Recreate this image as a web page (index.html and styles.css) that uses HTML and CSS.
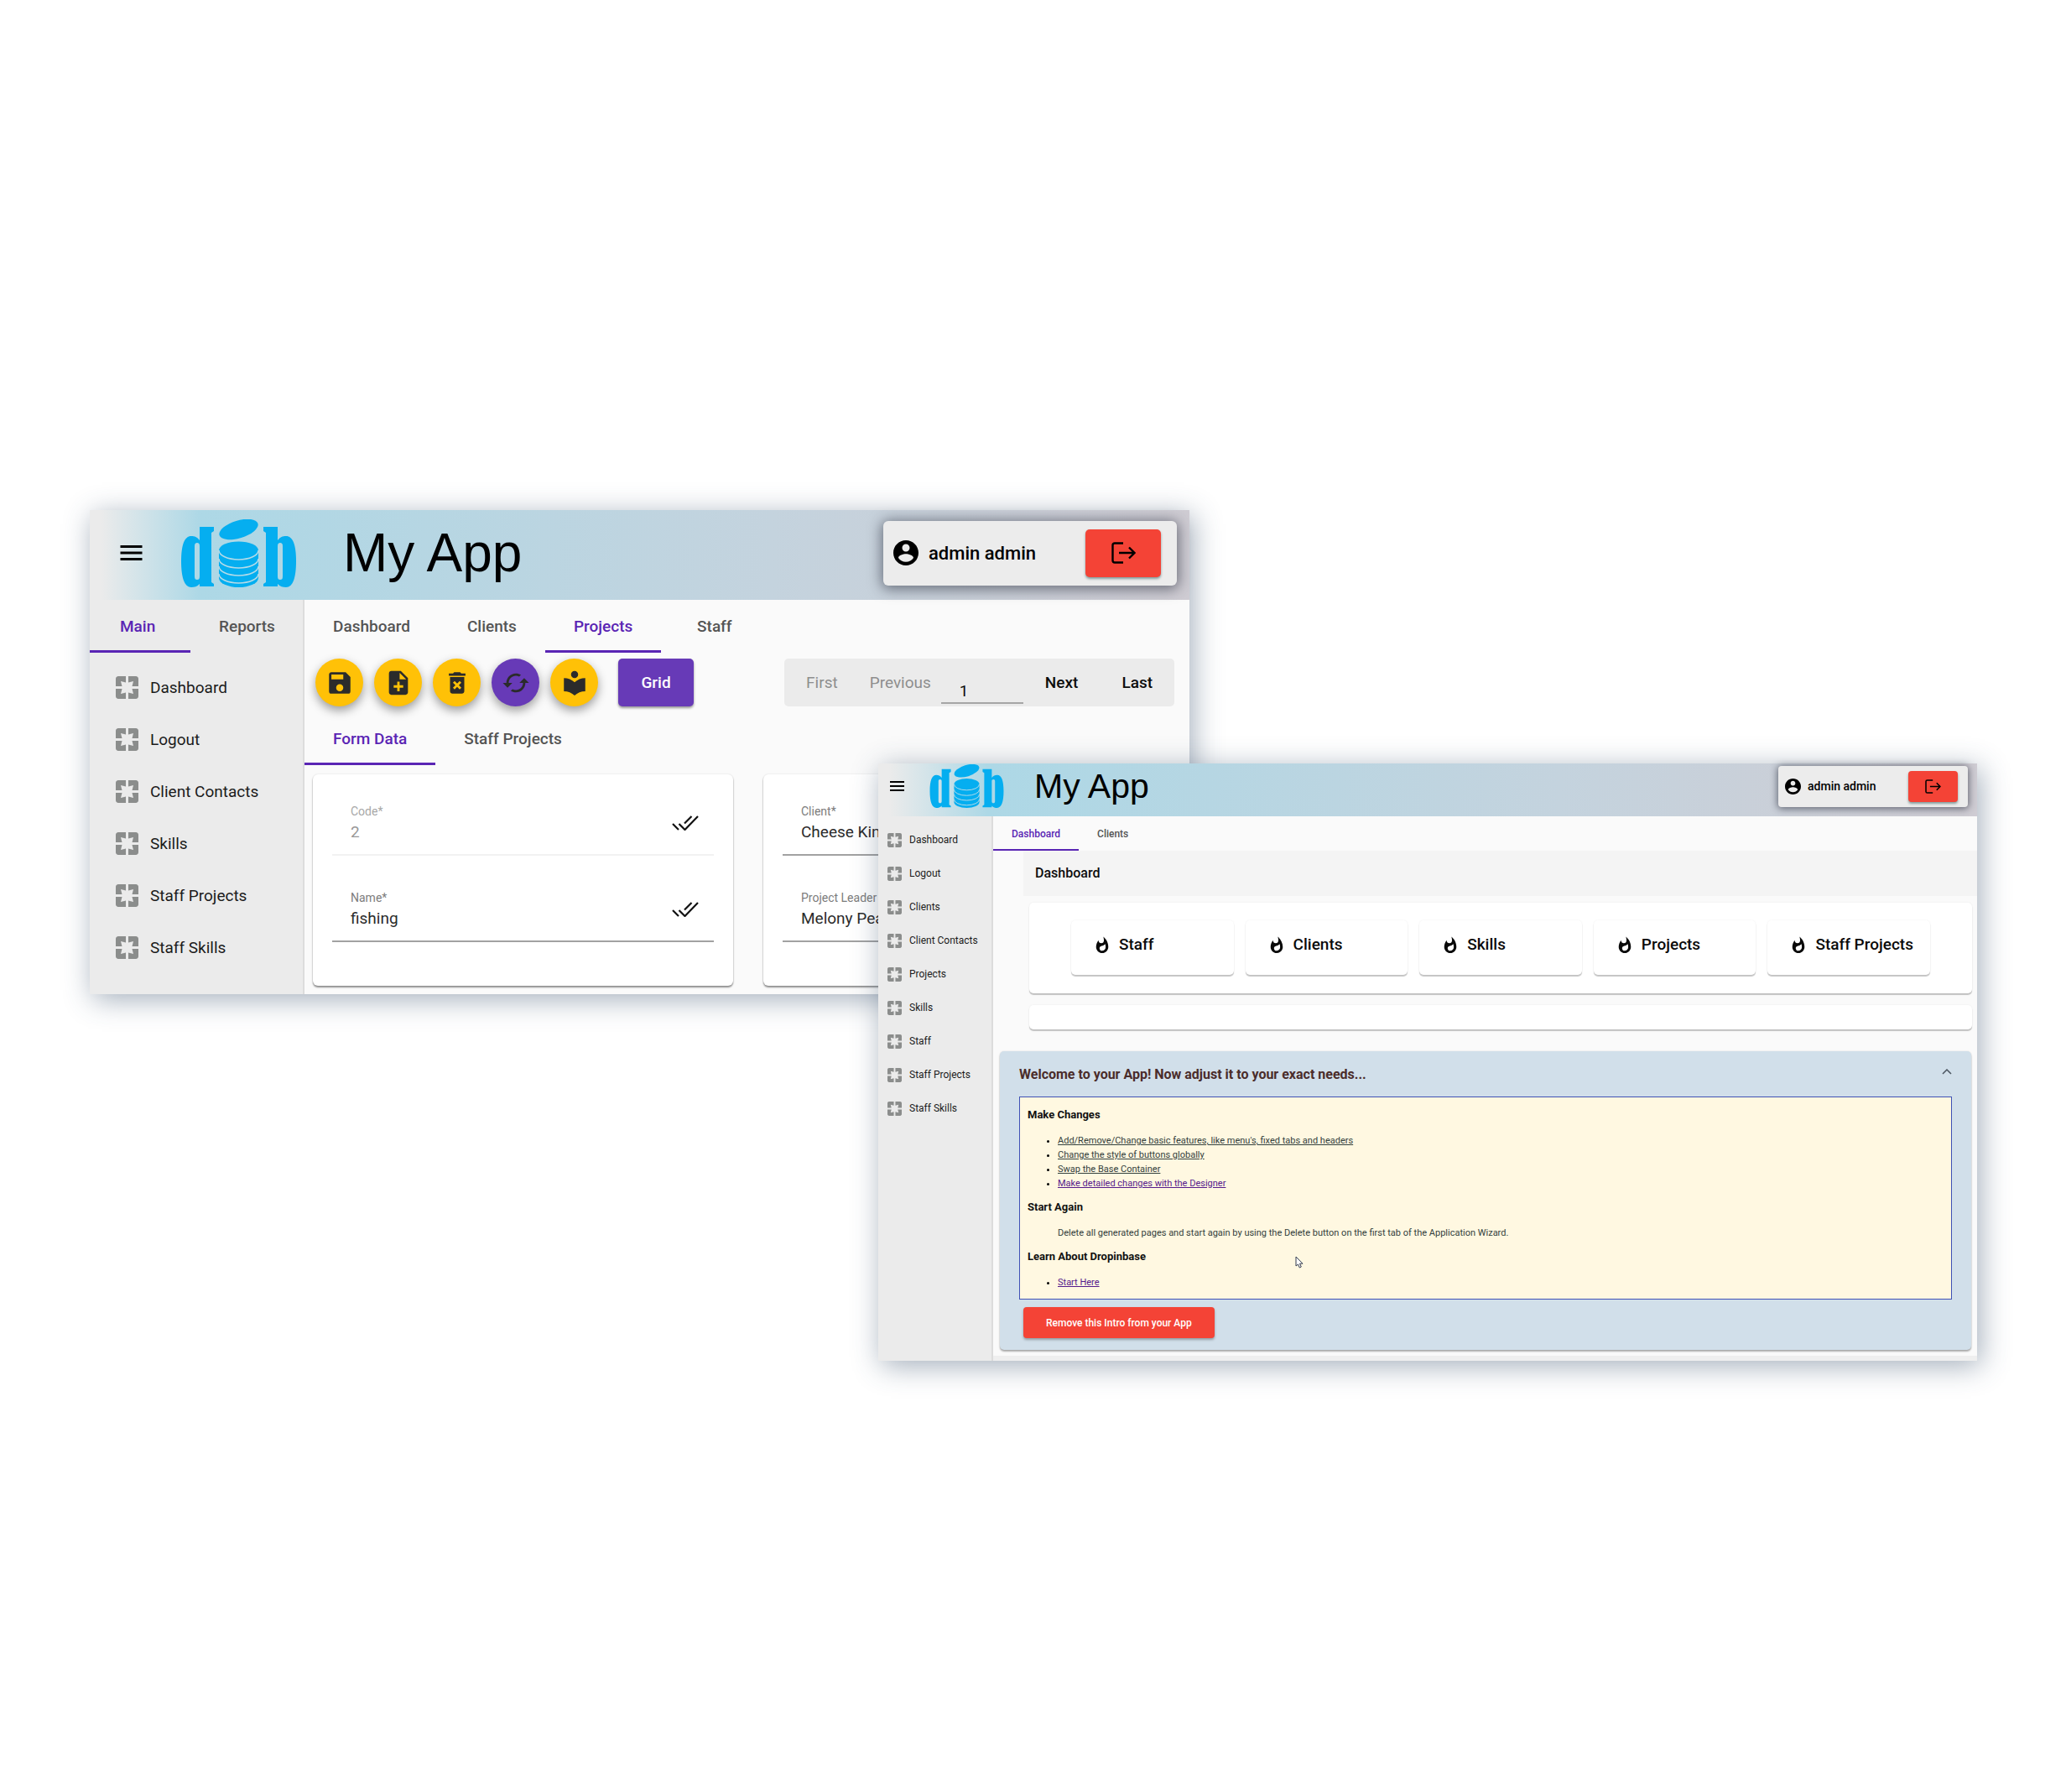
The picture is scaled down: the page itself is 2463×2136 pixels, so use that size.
FILE: index.html
```html
<!DOCTYPE html>
<html lang="en">
<head>
<meta charset="utf-8">
<meta name="viewport" content="width=device-width, initial-scale=1">
<title>My App</title>
<link rel="stylesheet" href="styles.css">
</head>
<body>
<svg class="sprite" aria-hidden="true">
  <symbol id="menu" viewBox="0 0 26 18"><path d="M0 0h26v3H0zM0 7.500h26v3H0zM0 15h26v3H0z"/></symbol>
  <symbol id="logo" viewBox="0 0 137 81">
    <g fill="#05aef0">
      <path id="logo-d" fill-rule="evenodd" d="M22 9h17v5l-3 2v59l3 2v3H22v-3c-3 3-6 4-10 4C4 81 0 70 0 50S4 20 12 20c4 0 7 1 10 5zM19 28c-2 0-3 1-3 4v36c0 3 1 4 3 4s3-1 3-4V32c0-3-1-4-3-4z"/>
      <use href="#logo-d" transform="matrix(-1 0 0 1 137 0)"/>
      <ellipse cx="68.500" cy="12" rx="24" ry="10.500" transform="rotate(-17 68.500 12)"/>
      <path d="M45 37a23.500 10.500 0 0 1 47 0v33a23.500 11 0 0 1-47 0z"/>
    </g>
    <path fill="none" stroke="#b5dbe8" stroke-width="1.500" d="M45 37a23.500 11 0 0 0 47 0M45 47a23.500 11 0 0 0 47 0M45 56a23.500 11 0 0 0 47 0M45 65a23.500 11 0 0 0 47 0"/>
  </symbol>
  <symbol id="account" viewBox="2 2 20 20"><path d="M12 2C6.480 2 2 6.480 2 12s4.480 10 10 10 10-4.480 10-10S17.520 2 12 2zm0 3c1.660 0 3 1.340 3 3s-1.340 3-3 3-3-1.340-3-3 1.340-3 3-3zm0 14.200c-2.500 0-4.710-1.280-6-3.220.03-1.990 4-3.080 6-3.080 1.990 0 5.970 1.090 6 3.080-1.290 1.940-3.500 3.220-6 3.220z"/></symbol>
  <symbol id="exit" viewBox="0 0 29 26"><path fill="none" stroke="currentColor" stroke-width="2.400" d="M14 1.500H4Q1.500 1.500 1.500 4v18q0 2.500 2.500 2.500h10M9 13h18M21 6.500l6.500 6.500-6.500 6.500"/></symbol>
  <symbol id="page" viewBox="3 3 18 18"><path d="M3 5v6h5L7 7l4 1V3H5c-1.100 0-2 .9-2 2zm5 8H3v6c0 1.100.9 2 2 2h6v-5l-4 1 1-4zm9 4l-4-1v5h6c1.100 0 2-.9 2-2v-6h-5l1 4zm2-14h-6v5l4-1-1 4h5V5c0-1.100-.9-2-2-2z"/></symbol>
  <symbol id="save" viewBox="0 0 24 24"><path d="M15 9H5V5h10M12 19a3 3 0 0 1-3-3 3 3 0 0 1 3-3 3 3 0 0 1 3 3 3 3 0 0 1-3 3M17 3H5c-1.110 0-2 .9-2 2v14a2 2 0 0 0 2 2h14a2 2 0 0 0 2-2V7l-4-4z"/></symbol>
  <symbol id="add" viewBox="0 0 24 24"><path d="M14 2H6c-1.100 0-1.990.9-1.990 2L4 20c0 1.100.89 2 1.990 2H18c1.100 0 2-.9 2-2V8l-6-6zm2 14h-3v3h-2v-3H8v-2h3v-3h2v3h3v2zm-3-7V3.500L18.500 9H13z"/></symbol>
  <symbol id="delete" viewBox="0 0 24 24"><path d="M6 19c0 1.100.9 2 2 2h8c1.100 0 2-.9 2-2V7H6v12zm2.460-7.120l1.410-1.410L12 12.590l2.120-2.120 1.410 1.410L13.410 14l2.120 2.120-1.410 1.410L12 15.410l-2.120 2.120-1.410-1.410L10.590 14l-2.130-2.120zM15.500 4l-1-1h-5l-1 1H5v2h14V4z"/></symbol>
  <symbol id="refresh" viewBox="0 0 24 24"><path d="M19 8l-4 4h3c0 3.310-2.690 6-6 6-1.010 0-1.970-.25-2.800-.7l-1.460 1.460C8.970 19.540 10.430 20 12 20c4.420 0 8-3.580 8-8h3l-4-4zM6 12c0-3.310 2.690-6 6-6 1.010 0 1.970.25 2.800.7l1.460-1.460C15.030 4.460 13.570 4 12 4c-4.420 0-8 3.580-8 8H1l4 4 4-4H6z"/></symbol>
  <symbol id="reader" viewBox="0 0 24 24"><path d="M12 11.550C9.640 9.350 6.480 8 3 8v11c3.480 0 6.640 1.350 9 3.550 2.360-2.190 5.520-3.550 9-3.550V8c-3.480 0-6.640 1.350-9 3.550zM12 8c1.660 0 3-1.340 3-3s-1.340-3-3-3-3 1.340-3 3 1.340 3 3 3z"/></symbol>
  <symbol id="checks" viewBox="0 0 32 18"><path fill="none" stroke="currentColor" stroke-width="2.200" d="M1 10l7 7M8.500 10l7 7L31 1M15 9.500L23.500 1"/></symbol>
  <symbol id="flame" viewBox="4 0 16 22"><path d="M13.500.67s.74 2.650.74 4.800c0 2.060-1.350 3.730-3.410 3.730-2.070 0-3.630-1.670-3.630-3.730l.03-.36C5.210 7.510 4 10.620 4 14c0 4.420 3.580 8 8 8s8-3.580 8-8C20 8.610 17.410 3.800 13.500.67zM11.710 19c-1.780 0-3.220-1.400-3.220-3.140 0-1.620 1.050-2.760 2.810-3.120 1.770-.36 3.600-1.210 4.620-2.580.39 1.290.59 2.650.59 4.040 0 2.650-2.150 4.800-4.800 4.800z"/></symbol>
  <symbol id="chevron" viewBox="0 0 12 7"><path fill="none" stroke="currentColor" stroke-width="1.500" d="M1 6l5-5 5 5"/></symbol>
</svg>

<main class="stage">
  <section class="app app-large">
    <header class="app-header">
      <button class="menu-button" aria-label="Menu"><svg><use href="#menu"/></svg></button>
      <svg class="logo" role="img" aria-label="Dropinbase"><use href="#logo"/></svg>
      <h1 class="app-title">My App</h1>
      <div class="user-card">
        <svg class="avatar"><use href="#account"/></svg>
        <span class="user-name">admin admin</span>
        <button class="logout" aria-label="Log out"><svg><use href="#exit"/></svg></button>
      </div>
    </header>
    <div class="app-body">
      <aside class="sidebar">
        <nav class="tabs side-tabs">
          <button class="tab active">Main</button>
          <button class="tab">Reports</button>
        </nav>
        <nav class="side-nav">
          <a href="#"><svg><use href="#page"/></svg>Dashboard</a>
          <a href="#"><svg><use href="#page"/></svg>Logout</a>
          <a href="#"><svg><use href="#page"/></svg>Client Contacts</a>
          <a href="#"><svg><use href="#page"/></svg>Skills</a>
          <a href="#"><svg><use href="#page"/></svg>Staff Projects</a>
          <a href="#"><svg><use href="#page"/></svg>Staff Skills</a>
        </nav>
      </aside>
      <div class="content">
        <nav class="tabs">
          <button class="tab">Dashboard</button>
          <button class="tab">Clients</button>
          <button class="tab active">Projects</button>
          <button class="tab">Staff</button>
        </nav>
        <div class="toolbar">
          <button class="round" aria-label="Save"><svg><use href="#save"/></svg></button>
          <button class="round" aria-label="Add"><svg><use href="#add"/></svg></button>
          <button class="round" aria-label="Delete"><svg><use href="#delete"/></svg></button>
          <button class="round purple" aria-label="Refresh"><svg><use href="#refresh"/></svg></button>
          <button class="round" aria-label="Audit trail"><svg><use href="#reader"/></svg></button>
          <button class="grid-button">Grid</button>
          <div class="pager">
            <button disabled>First</button>
            <button class="previous" disabled>Previous</button>
            <input type="text" value="1" aria-label="Record number">
            <button>Next</button>
            <button>Last</button>
          </div>
        </div>
        <nav class="tabs">
          <button class="tab active">Form Data</button>
          <button class="tab">Staff Projects</button>
        </nav>
        <form class="form-grid">
          <div class="form-card">
            <div class="field disabled">
              <div class="field-main"><label for="code">Code*</label><input id="code" type="text" value="2" disabled></div>
              <svg><use href="#checks"/></svg>
            </div>
            <div class="field">
              <div class="field-main"><label for="name">Name*</label><input id="name" type="text" value="fishing"></div>
              <svg><use href="#checks"/></svg>
            </div>
          </div>
          <div class="form-card">
            <div class="field">
              <div class="field-main"><label for="client">Client*</label><input id="client" type="text" value="Cheese Kin"></div>
            </div>
            <div class="field">
              <div class="field-main"><label for="leader">Project Leader</label><input id="leader" type="text" value="Melony Pea"></div>
            </div>
          </div>
        </form>
      </div>
    </div>
  </section>

  <section class="app app-compact">
    <header class="app-header">
      <button class="menu-button" aria-label="Menu"><svg><use href="#menu"/></svg></button>
      <svg class="logo" role="img" aria-label="Dropinbase"><use href="#logo"/></svg>
      <h1 class="app-title">My App</h1>
      <div class="user-card">
        <svg class="avatar"><use href="#account"/></svg>
        <span class="user-name">admin admin</span>
        <button class="logout" aria-label="Log out"><svg><use href="#exit"/></svg></button>
      </div>
    </header>
    <div class="app-body">
      <aside class="sidebar">
        <nav class="side-nav">
          <a href="#"><svg><use href="#page"/></svg>Dashboard</a>
          <a href="#"><svg><use href="#page"/></svg>Logout</a>
          <a href="#"><svg><use href="#page"/></svg>Clients</a>
          <a href="#"><svg><use href="#page"/></svg>Client Contacts</a>
          <a href="#"><svg><use href="#page"/></svg>Projects</a>
          <a href="#"><svg><use href="#page"/></svg>Skills</a>
          <a href="#"><svg><use href="#page"/></svg>Staff</a>
          <a href="#"><svg><use href="#page"/></svg>Staff Projects</a>
          <a href="#"><svg><use href="#page"/></svg>Staff Skills</a>
        </nav>
      </aside>
      <div class="content">
        <nav class="tabs">
          <button class="tab active">Dashboard</button>
          <button class="tab">Clients</button>
        </nav>
        <h2 class="page-heading">Dashboard</h2>
        <div class="panel tiles">
          <a class="tile" href="#"><svg><use href="#flame"/></svg>Staff</a>
          <a class="tile" href="#"><svg><use href="#flame"/></svg>Clients</a>
          <a class="tile" href="#"><svg><use href="#flame"/></svg>Skills</a>
          <a class="tile" href="#"><svg><use href="#flame"/></svg>Projects</a>
          <a class="tile" href="#"><svg><use href="#flame"/></svg>Staff Projects</a>
        </div>
        <div class="panel empty"></div>
        <section class="welcome">
          <div class="welcome-head">
            <h2>Welcome to your App! Now adjust it to your exact needs...</h2>
            <button aria-label="Collapse"><svg><use href="#chevron"/></svg></button>
          </div>
          <div class="intro">
            <h3>Make Changes</h3>
            <ul>
              <li><a href="#">Add/Remove/Change basic features, like menu's, fixed tabs and headers</a></li>
              <li><a href="#">Change the style of buttons globally</a></li>
              <li><a href="#">Swap the Base Container</a></li>
              <li><a class="visited" href="#">Make detailed changes with the Designer</a></li>
            </ul>
            <h3>Start Again</h3>
            <p>Delete all generated pages and start again by using the Delete button on the first tab of the Application Wizard.</p>
            <h3>Learn About Dropinbase</h3>
            <ul>
              <li><a class="visited" href="#">Start Here</a></li>
            </ul>
            <svg class="pointer" viewBox="0 0 10 15"><path fill="#fff" stroke="#333a4d" d="M1 1v11l2.500-2 1.800 4 2-1-1.800-3.800H9z"/></svg>
          </div>
          <button class="remove">Remove this Intro from your App</button>
        </section>
        <div class="footer-strip"></div>
      </div>
    </div>
  </section>
</main>
</body>
</html>
```

FILE: styles.css
```css
* { box-sizing: border-box; }

body {
  margin: 0;
  background: #fff;
  color: #1c1c1c;
  font-family: Roboto, "Liberation Sans", sans-serif;
}

h1, h2, h3, p, ul { margin: 0; padding: 0; }

button, input { font: inherit; color: inherit; }

button {
  padding: 0;
  border: 0;
  background: none;
  white-space: nowrap;
}

a { color: inherit; text-decoration: none; }

svg { display: block; flex: none; fill: currentColor; }

.sprite { position: absolute; width: 0; height: 0; }

/* Two overlapping windows share one grid row */
.stage {
  display: grid;
  grid-template-columns: 107fr 940fr 371fr 939fr 106fr;
  align-items: start;
  min-height: 100vh;
}

.app {
  grid-row: 1;
  min-width: 0;
  background: #fafafa;
  box-shadow: 4px 6px 32px rgba(50, 75, 105, 0.45);
}

.app-large { grid-column: 2 / 4; margin-top: 608px; font-size: 19px; }
.app-compact { grid-column: 3 / 5; margin-top: 910px; font-size: 12px; }

.app-header {
  display: flex;
  align-items: center;
  background: linear-gradient(90deg, #ebebeb 1%, #add8e6 10%, #c4d3de 62%, #cfccd3);
  color: #000;
}

.app-large .app-header { height: 107px; padding: 0 15px 5px 36px; }
.app-compact .app-header { height: 63px; padding: 0 11px 9px 14px; }

.app-large .menu-button svg { width: 27px; height: 18px; }
.app-compact .menu-button svg { width: 17px; height: 12px; }

.app-large .logo { width: 137px; height: 81px; margin-left: 46px; }
.app-compact .logo { width: 89px; height: 52px; margin-left: 30px; }

.app-title {
  font-family: "Liberation Sans", Arial, sans-serif;
  font-weight: 400;
  white-space: nowrap;
}

.app-large .app-title { margin-left: 56px; font-size: 64px; }
.app-compact .app-title { margin-left: 36px; font-size: 41px; }

.user-card {
  display: flex;
  align-items: center;
  margin-left: auto;
  background: #ececec;
  font-weight: 500;
}

.app-large .user-card {
  width: 350px;
  height: 77px;
  padding: 0 19px 0 12px;
  gap: 12px;
  border-radius: 6px;
  box-shadow: 0 2px 16px 2px rgba(40, 45, 60, 0.6);
  font-size: 22px;
}

.app-compact .user-card {
  width: 226px;
  height: 49px;
  padding: 0 12px 0 8px;
  gap: 8px;
  border-radius: 4px;
  box-shadow: 0 1px 9px 1px rgba(40, 45, 60, 0.65);
  font-size: 14px;
}

.app-large .avatar { width: 30px; height: 30px; }
.app-compact .avatar { width: 19px; height: 19px; }

.logout {
  display: grid;
  place-items: center;
  margin-left: auto;
  border-radius: 5px;
  background: #f44336;
  box-shadow: 0 2px 3px rgba(0, 60, 60, 0.45);
}

.app-large .logout { width: 90px; height: 57px; }
.app-large .logout svg { width: 29px; height: 26px; }
.app-compact .logout { width: 59px; height: 37px; border-radius: 4px; }
.app-compact .logout svg { width: 19px; height: 17px; }

.app-body { display: flex; }

.sidebar {
  flex: none;
  background: #ebebeb;
  border-right: 2px solid #dcdcdc;
}

.app-large .sidebar { width: 256px; }
.app-compact .sidebar { width: 137px; }

.content { flex: 1; min-width: 0; }

.tabs { display: flex; }

.tab {
  border-bottom: 3px solid transparent;
  border-top: 3px solid transparent;
  color: #545454;
  font-weight: 500;
}

.tab.active { border-bottom-color: #5a25b4; color: #5a25b4; }

.app-large .tab { min-width: 127px; height: 63px; padding: 0 34px; }
.app-large .side-tabs .active { min-width: 120px; padding: 0 42px 0 36px; }
.app-compact .tab { height: 41px; padding: 0 22px; border-width: 2px; }

.side-nav a {
  display: flex;
  align-items: center;
  color: #1b1b1b;
  white-space: nowrap;
}

.side-nav svg { color: #8b8d8c; }

.app-large .side-nav { padding-top: 10px; }
.app-large .side-nav a { height: 62px; padding-left: 31px; gap: 14px; }
.app-large .side-nav svg { width: 27px; height: 27px; }

.app-compact .side-nav { padding-top: 8px; }
.app-compact .side-nav a { height: 40px; padding-left: 11px; gap: 9px; }
.app-compact .side-nav svg { width: 17px; height: 17px; }

/* Record toolbar */
.toolbar {
  display: flex;
  gap: 14px;
  padding: 7px 18px 7px 13px;
}

.round {
  display: grid;
  place-items: center;
  width: 57px;
  height: 57px;
  margin-right: -1px;
  border-radius: 50%;
  background: #ffc107;
  color: #2b2b2b;
  box-shadow: 0 5px 12px rgba(0, 0, 0, 0.38);
}

.round svg { width: 34px; height: 34px; }

.round.purple, .grid-button { background: #673ab7; }

.grid-button {
  width: 90px;
  height: 57px;
  margin-left: 11px;
  border-radius: 5px;
  color: #fff;
  font-weight: 500;
  box-shadow: 0 2px 3px rgba(0, 0, 0, 0.4);
}

.pager {
  display: flex;
  height: 57px;
  margin-left: auto;
  border-radius: 5px;
  background: #ebebeb;
  color: #0c0c0c;
  font-weight: 500;
}

.pager button { padding: 0 26px; }
.pager button:disabled { color: #8e8e8e; font-weight: 400; }
.pager .previous { padding: 0 12px; }

.pager input {
  align-self: flex-end;
  width: 98px;
  height: 30px;
  margin-bottom: 3px;
  padding: 0 0 0 22px;
  border: 0;
  border-bottom: 2px solid #a6a6a6;
  background: none;
  font-weight: 400;
}

/* Record form */
.form-grid {
  display: grid;
  grid-template-columns: 1fr 1fr;
  gap: 36px;
  padding: 11px 7px 10px 10px;
}

.form-card {
  display: grid;
  gap: 40px;
  min-width: 0;
  padding: 34px 23px 52px;
  border-radius: 6px;
  background: #fff;
  box-shadow: 0 2px 2px rgba(0, 0, 0, 0.42), 0 0 2px rgba(0, 0, 0, 0.14);
}

.field {
  display: flex;
  align-items: center;
  padding: 0 18px 13px 22px;
  border-bottom: 2px solid #a2a2a2;
}

.field-main { flex: 1; min-width: 0; }

.field label {
  display: block;
  color: #7c7c7c;
  font-size: 14px;
  line-height: 21px;
}

.field input {
  display: block;
  width: 100%;
  height: 27px;
  padding: 0;
  border: 0;
  background: none;
  color: #2b2b2b;
}

.field svg { width: 32px; height: 18px; color: #111; }

.field.disabled { border-bottom-color: #f2f2f2; }
.field.disabled label { color: #a8a8a8; }
.field.disabled input { color: #979797; }

/* Dashboard */
.page-heading {
  margin-left: 36px;
  padding-left: 14px;
  background: #f4f4f4;
  color: #0c0c0c;
  font-size: 16px;
  font-weight: 500;
  line-height: 54px;
}

.panel {
  margin: 0 6px 14px 43px;
  border-radius: 5px;
  background: #fff;
  box-shadow: 0 2px 1px rgba(0, 0, 0, 0.22), 0 0 2px rgba(0, 0, 0, 0.08);
}

.tiles {
  display: grid;
  grid-template-columns: repeat(5, 1fr);
  gap: 14px;
  margin-top: 8px;
  padding: 21px 50px 22px;
}

.tile {
  display: flex;
  align-items: center;
  gap: 12px;
  height: 65px;
  padding: 0 0 8px 29px;
  border-radius: 5px;
  color: #0a0a0a;
  font-size: 19px;
  font-weight: 500;
  white-space: nowrap;
  box-shadow: 0 2px 1px rgba(0, 0, 0, 0.22), 0 0 2px rgba(0, 0, 0, 0.08);
}

.tile svg { width: 16px; height: 20px; }

.panel.empty { height: 29px; margin-bottom: 26px; }

.welcome {
  margin: 0 7px 7px 8px;
  padding: 0 23px 14px;
  border-radius: 5px;
  background: #d1dfea;
  box-shadow: 0 2px 2px rgba(0, 0, 0, 0.3), 0 0 2px rgba(0, 0, 0, 0.12);
}

.welcome-head {
  display: flex;
  align-items: center;
  justify-content: space-between;
  height: 54px;
}

.welcome-head h2 { color: #4a2c2a; font-size: 16px; font-weight: 700; }
.welcome-head svg { width: 12px; height: 7px; margin-bottom: 6px; color: #4b5560; }

.intro {
  position: relative;
  padding: 13px 9px 11px;
  border: 1px solid #3f51b5;
  background: #fff8e1;
  font-size: 11px;
  line-height: 17px;
}

.intro h3 { margin-bottom: 14px; color: #111; font-size: 13px; font-weight: 700; line-height: 16px; }
.intro ul, .intro p { margin-bottom: 12px; padding-left: 36px; color: #33403c; }
.intro ul:last-of-type { margin-bottom: 0; }
.intro li::marker { color: #000; }
.intro a { text-decoration: underline; }
.intro .visited { color: #551a8b; }

/* Mouse pointer resting over the intro */
.pointer { position: absolute; left: 328px; top: 189px; width: 10px; height: 15px; }

.remove {
  display: block;
  height: 37px;
  margin: 9px 0 0 5px;
  padding: 0 27px;
  border-radius: 4px;
  background: #f44336;
  color: #fff;
  font-weight: 500;
  box-shadow: 0 2px 3px rgba(0, 0, 0, 0.3);
}

.footer-strip { height: 6px; background: #efefef; }
```
